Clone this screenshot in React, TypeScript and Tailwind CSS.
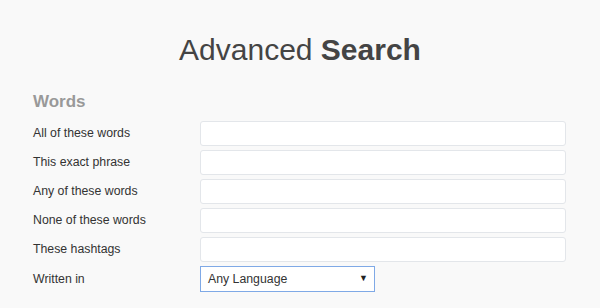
import React from "react";

const fields = [
  "All of these words",
  "This exact phrase",
  "Any of these words",
  "None of these words",
  "These hashtags",
];

export default function App() {
  return (
    <div className="min-h-screen bg-[#f9f9f9] font-['Liberation_Sans',Arial,sans-serif] text-[#333]">
      <h1 className="pt-[32px] text-center text-[30px] leading-[35px] text-[#444]">
        Advanced <span className="font-bold">Search</span>
      </h1>
      <div className="px-[33px] pt-[25px]">
        <h2 className="text-[17px] font-bold leading-[20px] text-[#999]">Words</h2>
        <div className="mt-[9px] flex flex-col gap-[4px]">
          {fields.map((label) => (
            <div key={label} className="flex h-[25px] items-center">
              <label className="w-[167px] text-[12.3px]">{label}</label>
              <input
                type="text"
                className="h-[25px] w-[366px] rounded-[3px] border border-[#e3e6ea] bg-white"
              />
            </div>
          ))}
          <div className="flex h-[26px] items-center">
            <label className="w-[167px] text-[12.3px]">Written in</label>
            <div className="flex h-[26px] w-[175px] items-center justify-between border border-[#7fa9e6] bg-white pl-[7px] pr-[6px] text-[12.3px]">
              <span>Any Language</span>
              <span className="text-[9px] text-[#222]">▼</span>
            </div>
          </div>
        </div>
      </div>
    </div>
  );
}
